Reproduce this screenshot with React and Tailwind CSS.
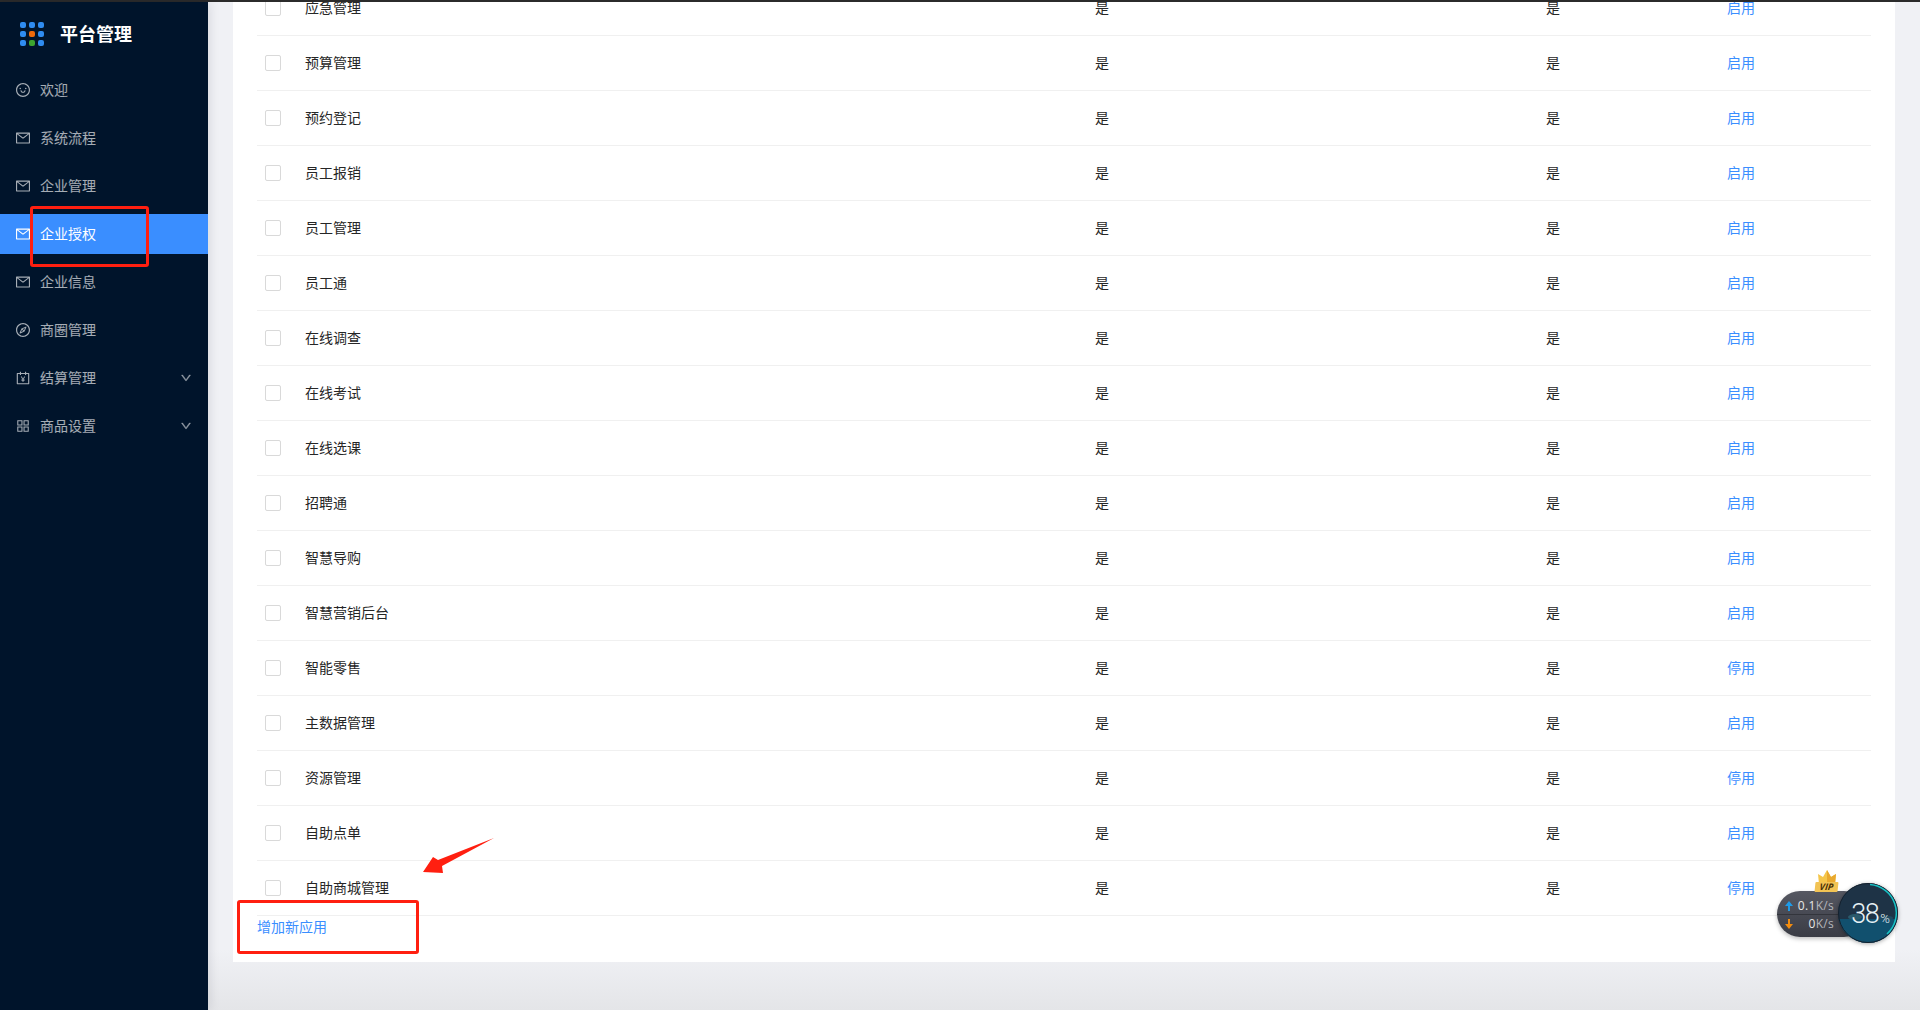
import {
  AiOutlineSmile,
  AiOutlineMail,
  AiOutlineCompass,
  AiOutlineAccountBook,
  AiOutlineAppstore,
  AiOutlineDown,
} from 'react-icons/ai';

const MENU = [
  { label: '欢迎', icon: AiOutlineSmile },
  { label: '系统流程', icon: AiOutlineMail },
  { label: '企业管理', icon: AiOutlineMail },
  { label: '企业授权', icon: AiOutlineMail, active: true },
  { label: '企业信息', icon: AiOutlineMail },
  { label: '商圈管理', icon: AiOutlineCompass },
  { label: '结算管理', icon: AiOutlineAccountBook, arrow: true },
  { label: '商品设置', icon: AiOutlineAppstore, arrow: true },
];

const APPS = [
  { name: '应急管理', action: '启用' },
  { name: '预算管理', action: '启用' },
  { name: '预约登记', action: '启用' },
  { name: '员工报销', action: '启用' },
  { name: '员工管理', action: '启用' },
  { name: '员工通', action: '启用' },
  { name: '在线调查', action: '启用' },
  { name: '在线考试', action: '启用' },
  { name: '在线选课', action: '启用' },
  { name: '招聘通', action: '启用' },
  { name: '智慧导购', action: '启用' },
  { name: '智慧营销后台', action: '启用' },
  { name: '智能零售', action: '停用' },
  { name: '主数据管理', action: '启用' },
  { name: '资源管理', action: '停用' },
  { name: '自助点单', action: '启用' },
  { name: '自助商城管理', action: '停用' },
];

const Logo = () => {
  const colors = ['#2f8cf0', '#2f8cf0', '#2f8cf0', '#2f8cf0', '#f06a0a', '#2f8cf0', '#2f8cf0', '#3da52f', '#2f8cf0'];
  return (
    <svg width="24" height="24" viewBox="0 0 24 24" className="shrink-0">
      {colors.map((c, i) => (
        <rect key={i} x={(i % 3) * 9} y={Math.floor(i / 3) * 9} width="6" height="6" rx="2" fill={c} />
      ))}
    </svg>
  );
};

const Sidebar = () => (
  <aside className="relative z-10 w-[208px] h-full shrink-0 bg-[#00142b] shadow-[2px_0_10px_rgba(0,21,41,0.1)]">
    <div className="h-[64px] mb-1 flex items-center pl-5 gap-4">
      <Logo />
      <span className="pb-[2px] text-lg font-bold text-white">平台管理</span>
    </div>
    <nav className="flex flex-col gap-2">
      {MENU.map((item) => {
        const Icon = item.icon;
        return (
          <div
            key={item.label}
            className={`h-10 flex items-center pl-[15px] pr-4 text-sm ${
              item.active ? 'bg-[#3a8eff] text-white' : 'text-white/65'
            }`}
          >
            <Icon className="w-4 h-4 mr-[9px] shrink-0" />
            <span className="flex-1 pb-[2px]">{item.label}</span>
            {item.arrow && <AiOutlineDown className="w-3 h-3 text-white/45" stroke="currentColor" strokeWidth="50" />}
          </div>
        );
      })}
    </nav>
  </aside>
);

const Row = ({ name, action }) => (
  <div className="h-[55px] flex items-center border-b border-[#f0f0f0] text-sm text-[#262626]">
    <div className="w-[48px] pl-2 shrink-0">
      <span className="block w-4 h-4 bg-white border border-[#d9d9d9] rounded-xs" />
    </div>
    <div className="w-[790px] pb-[2px] shrink-0">{name}</div>
    <div className="w-[451px] pb-[2px] shrink-0">是</div>
    <div className="w-[181px] pb-[2px] shrink-0">是</div>
    <a className="pb-[2px] text-[#3a8eff]">{action}</a>
  </div>
);

const SpeedWidget = () => (
  <div className="absolute left-[1777px] top-[868px] w-[124px] h-[78px] font-['Open_Sans','Liberation_Sans',sans-serif]">
    {/* vip crown */}
    <svg width="24" height="24" viewBox="0 0 24 24" className="absolute left-[38px] top-[1px]">
      <path d="M4 15 L3 5 L8 8 L12 1 L16 8 L21 5 L20 15 Z" fill="#f5c64a" />
      <path d="M12 1 L16 8 L21 5 L20 15 L12 15 Z" fill="#e9a92f" />
    </svg>
    <div className="absolute left-[38px] top-[14px] w-[23px] h-[10px] rounded-[1px] bg-[#f2c354] text-[#4a3005] text-[9px] leading-[10px] font-bold italic text-center -skew-x-6 z-10">
      VIP
    </div>

    <div className="absolute left-0 top-[23px] w-[90px] h-[46px] pt-[6px] rounded-full bg-linear-to-b from-[#565862] to-[#3a3c45] shadow-[0_2px_4px_rgba(0,0,0,0.25)] text-xs leading-none tracking-[0.3px]">
      <div className="h-[18px] flex items-center justify-end pr-[33px] pl-2 border-b border-[#33353c] text-[#e8e8e8]">
        <svg width="8" height="10" viewBox="0 0 8 10" className="mr-auto">
          <path d="M4 0 L8 5 H5 V10 H3 V5 H0 Z" fill="#1e9be8" />
        </svg>
        0.1<span className="text-[#b4b6bc]">K/s</span>
      </div>
      <div className="h-[18px] flex items-center justify-end pr-[33px] pl-2 text-[#e8e8e8]">
        <svg width="8" height="10" viewBox="0 0 8 10" className="mr-auto">
          <path d="M3 0 H5 V5 H8 L4 10 L0 5 H3 Z" fill="#f28c0f" />
        </svg>
        0<span className="text-[#b4b6bc]">K/s</span>
      </div>
    </div>

    <div className="absolute left-[61px] top-[15px] w-[60px] h-[60px] shadow-[0_1px_4px_rgba(0,0,0,0.35)] rounded-full">
      <svg width="60" height="60" viewBox="0 0 60 60" className="absolute inset-0">
        <defs>
          <clipPath id="disc">
            <circle cx="30" cy="30" r="30" />
          </clipPath>
        </defs>
        <g clipPath="url(#disc)">
          <rect width="60" height="60" fill="#1e3346" />
          <rect y="36" width="60" height="24" fill="#11506e" />
          <ellipse cx="17" cy="34" rx="7" ry="3" fill="#2a5a6c" />
          <ellipse cx="47" cy="35" rx="8" ry="2.5" fill="#1f4a60" />
        </g>
        <circle cx="30" cy="30" r="29.5" fill="none" stroke="#15222f" />
        <path d="M32 1.5 A28.5 28.5 0 0 1 49 51" fill="none" stroke="#17c3c6" strokeWidth="1.5" />
      </svg>
      <div className="absolute inset-0 flex items-center justify-center pl-[5px] pt-[3px] text-[#e6f0f4] font-['Roboto',sans-serif] font-light text-[27px] tracking-[-1.5px] leading-none">
        38<span className="text-[13px] mt-[8px] ml-[2px] tracking-normal">%</span>
      </div>
    </div>
  </div>
);

const App = () => (
  <div className="relative w-[1920px] h-[1010px] overflow-hidden bg-white font-['Noto_Sans_CJK_SC','Liberation_Sans',sans-serif]">
    <div className="h-[2px] bg-[#2b2b2b]" />
    <div className="flex h-[1008px]">
      <Sidebar />
      <main className="flex-1 px-[25px] bg-linear-to-b from-[#f0f1f5] from-[94%] to-[#e4e5e8]">
        <div className="h-[960px] overflow-hidden bg-white px-6">
          <div className="-mt-[21px]">
            {APPS.map((app) => (
              <Row key={app.name} name={app.name} action={app.action} />
            ))}
            <a className="block -mt-px text-sm leading-[22px] text-[#3a8eff]">增加新应用</a>
          </div>
        </div>
      </main>
    </div>

    {/* red annotation marks on top of the page */}
    <div className="absolute left-[30px] top-[206px] w-[119px] h-[61px] border-[3px] border-[#ff1f10] rounded-[3px] z-20" />
    <div className="absolute left-[237px] top-[900px] w-[182px] h-[54px] border-[3px] border-[#ff1f10] rounded-[3px] z-20" />
    <svg width="80" height="44" viewBox="0 0 80 44" className="absolute left-[420px] top-[834px] z-20">
      <path d="M3 38 L13 23 L18 26 L74 4 L22 32 L23 39 Z" fill="#ff1f10" />
    </svg>

    <SpeedWidget />
  </div>
);

export default App;
